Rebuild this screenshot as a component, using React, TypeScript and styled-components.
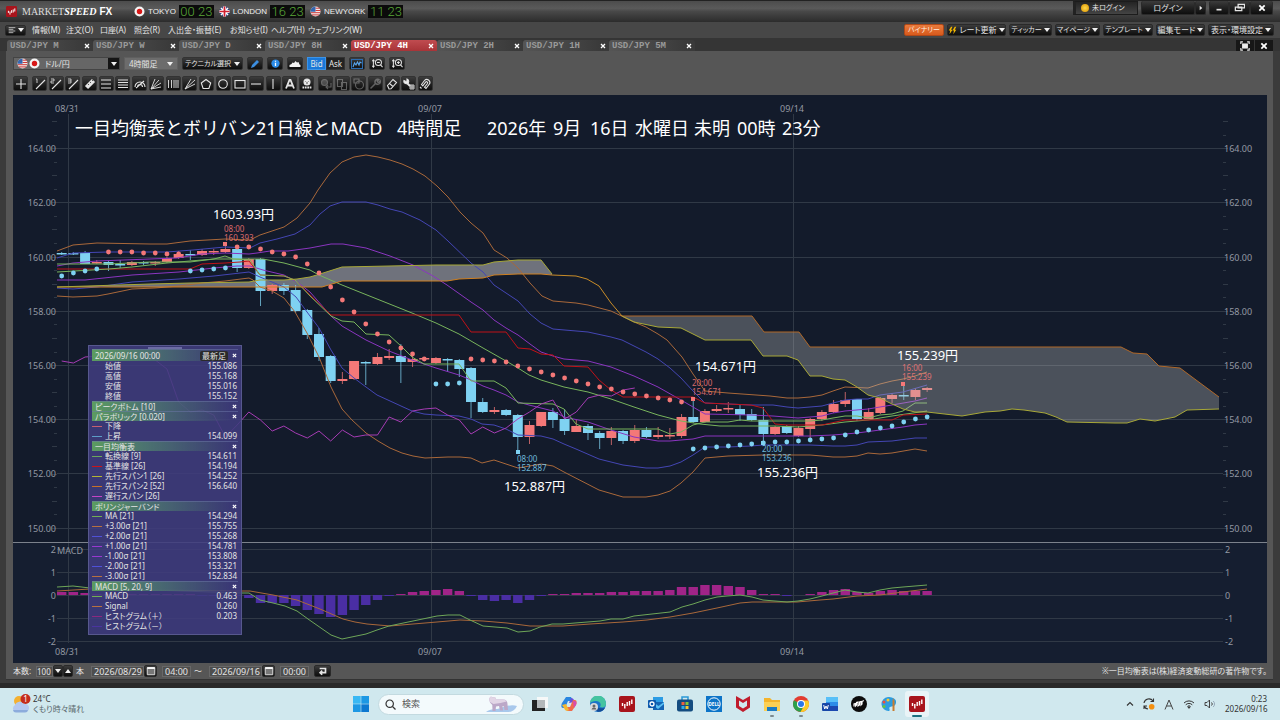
import React from "react";
import styled, { createGlobalStyle, css } from "styled-components";

/* ---------- chart data ---------- */

type Kind = "up" | "down";
// kind, body top, body bottom, wick top, wick bottom
type Candle = [Kind, number, number, number, number];

const candles: Candle[] = [
  ["down", 253, 254, 252, 255], ["down", 253, 254, 252, 255], ["down", 253, 264, 251, 264],
  ["up", 262, 263, 260, 264], ["down", 262, 265, 261, 271], ["down", 264, 265, 260, 268],
  ["up", 262, 265, 261, 266], ["down", 262, 263, 261, 265], ["up", 262, 263, 261, 266],
  ["up", 258, 262, 257, 263], ["up", 254, 258, 251, 259], ["down", 254, 255, 250, 260],
  ["up", 251, 255, 249, 256], ["up", 251, 252, 249, 255], ["up", 249, 252, 243, 253],
  ["down", 249, 268, 248, 272], ["up", 259, 268, 258, 269], ["down", 259, 291, 258, 306],
  ["up", 285, 291, 284, 294], ["down", 285, 291, 283, 295], ["down", 290, 311, 285, 313],
  ["down", 310, 335, 309, 339], ["down", 334, 357, 328, 361], ["down", 356, 381, 355, 383],
  ["up", 379, 381, 372, 384], ["up", 361, 379, 361, 380], ["down", 362, 363, 361, 385],
  ["up", 357, 364, 353, 365], ["up", 356, 358, 349, 360], ["down", 356, 362, 344, 383],
  ["up", 359, 362, 356, 367], ["up", 358, 359, 357, 361], ["up", 358, 363, 357, 364],
  ["down", 359, 360, 358, 371], ["down", 360, 369, 359, 377], ["down", 368, 402, 367, 418],
  ["down", 402, 412, 398, 413], ["up", 410, 412, 407, 414], ["down", 410, 415, 409, 416],
  ["down", 415, 437, 414, 451], ["up", 425, 437, 421, 444], ["up", 412, 426, 412, 427],
  ["down", 412, 420, 408, 428], ["down", 419, 431, 409, 435], ["up", 426, 432, 420, 432],
  ["down", 426, 433, 424, 440], ["down", 433, 438, 431, 449], ["up", 431, 438, 427, 445],
  ["down", 431, 441, 430, 444], ["up", 430, 441, 425, 443], ["down", 430, 437, 427, 438],
  ["up", 435, 437, 427, 439], ["up", 435, 436, 428, 439], ["up", 417, 436, 414, 438],
  ["down", 417, 422, 399, 423], ["up", 411, 422, 409, 423], ["up", 409, 411, 405, 412],
  ["up", 408, 409, 402, 413], ["down", 409, 415, 405, 421], ["down", 414, 420, 409, 421],
  ["down", 420, 434, 407, 443], ["up", 427, 434, 426, 435], ["down", 426, 433, 425, 434],
  ["up", 428, 436, 426, 437], ["up", 419, 429, 418, 438], ["up", 412, 419, 410, 421],
  ["up", 404, 412, 400, 413], ["up", 400, 404, 392, 407], ["down", 399, 419, 399, 421],
  ["up", 412, 419, 408, 419], ["up", 398, 413, 397, 414], ["up", 395, 399, 393, 403],
  ["down", 395, 396, 384, 400], ["up", 390, 397, 388, 400], ["up", 388, 390, 387, 392],
];

const STEP = 11.695;
const xAt = (i: number) => 61.7 + STEP * i;

// parabolic dots: colour kind, first candle index, y values
const parabolic: [Kind, number, number[]][] = [
  ["down", 0, [276, 273, 271, 269]],
  ["up", 4, [252, 252, 252, 253, 253, 254, 254]],
  ["down", 11, [271, 270, 269, 268]],
  ["up", 15, [247, 247, 249, 252, 254, 257, 264, 273, 287, 300, 312, 324, 334, 342, 348, 354, 359]],
  ["down", 32, [384, 384, 383]],
  ["up", 35, [359, 360, 361, 362, 366, 369, 372, 375, 378, 381, 384, 387, 389, 392, 394, 396, 398, 400, 402]],
  ["down", 54, [449, 448, 447, 446, 445, 444, 443, 442, 442, 441, 440, 439, 438, 435, 432, 430, 428, 426, 422, 419, 417]],
];

const histogram = [
  592, 592, 593, 594, 594, 594, 594, 594, 594, 594, 594, 594, 596, 596, 596, 596,
  598, 603, 603, 603, 606, 610, 614, 617, 615, 610, 605, 600, 596, 594, 592, 591, 590, 589, 591,
  596, 600, 601, 600, 603, 600, 596, 594, 594, 593, 593, 593, 592, 592, 591, 591, 591, 590, 587,
  587, 585, 585, 586, 587, 590, 594, 594, 596, 595, 594, 592, 590, 589, 592, 593, 591, 590, 591, 591, 591,
];

const ORANGE = "#a9683a";
const BLUE = "#4446b4";
const PURPLE = "#8a35c0";
const GREEN = "#78b45c";

const lines: [string, string][] = [
  [ORANGE, "57,251 73,245 97,243 150,244 167,244 190,241 225,239 250,240 260,235 284,227 297,218 310,203 318,190 330,173 342,162 354,157 366,155 378,157 390,160 402,164 413,169 425,176 437,186 448,197 460,212 471,223 483,233 494,250 507,258 518,268 530,283 542,296 553,301 576,303 588,305 611,311 634,322 646,327 658,334 667,340 682,357 693,374 705,391 728,393 770,396 787,398 798,398 810,397 822,395 833,391 845,387 868,388 880,384 892,381 903,379 915,376 927,372"],
  [BLUE, "57,258 73,253 108,252 167,252 193,250 225,247 250,248 260,243 277,239 295,234 310,225 320,214 330,206 342,202 354,202 366,202 378,205 390,209 402,212 420,220 436,230 448,241 471,263 483,272 494,285 518,301 530,314 541,323 553,329 588,332 611,337 622,340 634,346 646,352 658,359 670,368 681,378 693,391 705,403 728,404 751,405 773,405 787,407 798,408 810,407 822,406 833,403 845,400 857,399 868,399 880,395 903,392 927,385"],
  [PURPLE, "57,266 73,263 97,261 150,259 177,258 202,254 225,253 249,254 257,253 270,251 288,251 310,248 331,244 343,244 366,248 390,256 413,265 433,276 447,285 471,302 483,310 494,320 506,328 518,335 530,344 541,352 553,356 564,359 588,361 611,367 634,376 658,387 681,400 693,407 705,414 751,415 773,416 798,418 822,416 833,413 845,411 868,409 892,405 915,401 927,398"],
  [GREEN, "57,264 85,264 109,264 150,262 190,262 214,259 250,259 263,259 284,263 310,270 319,275 342,285 377,299 412,313 436,323 459,334 483,348 506,361 518,368 529,375 541,380 564,387 588,392 611,399 634,407 658,415 681,421 700,424 720,426 775,426 798,427 822,425 845,422 868,420 892,416 913,413 927,411"],
  [PURPLE, "57,280 85,280 132,275 179,272 214,268 237,266 250,266 263,270 284,275 297,282 310,292 331,316 342,326 354,333 366,340 389,351 412,360 436,368 459,375 471,380 483,386 494,390 506,395 518,402 529,405 553,411 564,417 588,422 611,430 634,437 658,441 670,441 681,440 693,439 705,436 775,436 810,436 833,435 857,433 880,430 903,427 915,425 927,424"],
  [BLUE, "57,288 73,289 97,287 132,282 179,279 214,276 249,272 260,277 272,282 284,287 296,297 307,312 319,328 331,350 342,368 354,378 366,387 377,395 401,406 412,411 424,414 436,415 459,416 471,419 482,424 494,425 506,429 518,435 541,436 553,439 564,444 576,449 599,459 623,465 646,468 658,468 670,466 681,462 693,455 705,447 728,447 751,446 763,445 810,445 833,446 845,446 857,445 868,442 892,441 915,438 927,438"],
  [ORANGE, "57,296 73,297 97,296 108,294 132,289 155,288 179,286 202,283 225,281 249,278 253,280 260,287 272,291 284,298 295,312 307,333 319,357 331,387 342,409 352,420 366,433 378,441 390,448 402,453 413,456 425,458 448,457 460,457 471,458 482,463 494,460 506,464 518,468 541,464 553,466 564,472 599,490 623,497 646,497 658,495 670,491 681,483 693,472 705,458 728,456 763,455 810,455 822,456 833,457 845,457 857,456 868,453 880,454 892,453 915,449 927,451"],
  ["#c01218", "57,269 190,269 202,264 225,263 240,262 249,261 260,275 284,276 295,280 310,295 331,315 459,315 471,332 506,332 518,348 530,349 541,354 553,355 564,366 588,367 599,380 611,390 623,397 693,397 705,403 751,405 763,408 775,424 787,425 822,425 845,420 892,420 903,415 927,414"],
  [GREEN, "57,272 109,269 132,267 167,263 190,261 214,259 225,256 233,259 250,260 260,275 284,276 295,280 310,296 331,316 342,321 354,322 366,334 389,335 401,346 412,357 424,364 459,364 471,381 494,381 506,388 518,403 553,404 564,409 576,424 588,429 658,429 670,434 681,432 693,425 705,422 728,422 740,420 751,421 810,421 822,420 833,418 845,416 857,416 868,418 880,415 892,414 903,411 915,403 927,403"],
];

const chikou = candles
  .slice(25)
  .map(([kind, top, bottom], i) => `${xAt(i)},${kind === "up" ? top : bottom}`)
  .join(" ");

const span1a = "57,287 150,284 190,283 249,282 260,280 284,280 297,279 310,277 320,274 342,267 436,265 483,265 494,262 518,260 541,260 552,274";
const span2a = "57,287 322,287 342,281 447,281 459,279 483,278 494,275 518,274 541,274 552,275";
const spanJoin = "552,275 576,276 587,279 599,286 611,303 622,316";
const span2b = "622,316 752,316 764,332 799,332 810,347 1121,347 1133,353 1147,354 1159,366 1180,368 1192,377 1219,397";
const span1b = "622,316 634,322 658,327 681,328 693,334 705,340 751,340 763,356 787,356 798,360 810,376 822,376 833,379 845,380 857,387 868,395 880,398 892,404 903,409 915,412 927,412 962,416 985,412 1000,411 1012,409 1024,410 1045,413 1056,417 1067,422 1115,423 1127,423 1140,419 1155,421 1175,417 1187,410 1219,409";
const reversed = (points: string) => points.split(" ").reverse().join(" ");

const macdLine = "57,587 73,586 90,588 242,593 249,593 260,600 273,603 285,606 297,611 308,619 331,635 342,639 366,634 377,630 389,626 413,621 437,616 448,615 460,615 470,620 483,626 507,628 518,632 530,631 540,627 552,624 563,624 575,623 600,621 611,619 623,619 634,616 670,612 682,607 693,604 705,600 717,597 727,596 740,595 752,597 763,600 787,602 798,601 810,599 822,596 833,593 845,590 857,592 868,593 880,590 892,588 903,587 927,585";
const signalLine = "57,591 90,589 150,590 242,591 250,591 273,595 297,600 320,609 343,619 355,622 367,624 390,626 413,624 437,622 460,620 483,621 507,623 530,626 563,626 590,624 623,622 647,620 670,617 693,613 717,608 740,603 752,602 763,602 797,602 820,600 833,599 857,596 880,595 903,592 927,589";

const priceRows: [string, number][] = [
  ["164.00", 148], ["162.00", 202], ["160.00", 257], ["158.00", 311],
  ["156.00", 365], ["154.00", 419], ["152.00", 473], ["150.00", 528],
];
const macdRows: [string, number][] = [["2", 549], ["1", 572], ["0", 595], ["-1", 618], ["-2", 641]];
const dateCols: [string, number][] = [["08/31", 68], ["09/07", 431], ["09/14", 793]];

const headline: [string, number][] = [
  ["一目均衡表とボリバン21日線とMACD", 75], ["4時間足", 397], ["2026年", 487], ["9月", 553],
  ["16日", 590], ["水曜日", 635], ["未明", 694], ["00時", 737], ["23分", 782],
];
const prices: [string, number, number][] = [
  ["1603.93円", 213, 219], ["154.671円", 695, 371], ["155.239円", 897, 360],
  ["155.236円", 757, 477], ["152.887円", 504, 491],
];
const peaks: [Kind, string, string, number, number, number, number][] = [
  ["up", "08:00", "160.393", 224, 232, 225, 244],
  ["down", "08:00", "152.887", 517, 462, 518, 452],
  ["up", "20:00", "154.671", 692, 386, 693, 399],
  ["down", "20:00", "153.236", 762, 452, 763, 443],
  ["up", "16:00", "155.239", 902, 371, 903, 384],
];
const tone: Record<Kind, string> = { up: "#f47878", down: "#7fd2f2" };

/* ---------- shared styles ---------- */

const GlobalStyle = createGlobalStyle`
  * { box-sizing: border-box; }
  body {
    margin: 0;
    background: #d0e8ee;
    font-family: "Noto Sans", "Noto Sans CJK JP", sans-serif;
    font-size: 8px;
    line-height: 10px;
    color: #e4e4e4;
    font-feature-settings: "palt";
  }
  button, input, select {
    font: inherit;
    font-feature-settings: inherit;
    color: inherit;
    margin: 0;
    padding: 0;
    border: 0;
    border-radius: 0;
    background: none;
  }
`;

const bevel = css`
  background: linear-gradient(#3c3c3c, #1e1e1e 60%, #0e0e0e);
  border: 1px solid #2a2a2a;
  border-radius: 2px;
`;

const Page = styled.div`
  display: flex;
  flex-direction: column;
  min-height: 100vh;
`;
const AppWindow = styled.main`
  padding-bottom: 3px;
  background: #3b3b3b;
  border-bottom: 5px solid #292929;
`;
const Spacer = styled.div`
  flex: 1;
`;

/* ---------- title bar ---------- */

const TitleBar = styled.header`
  display: flex;
  align-items: center;
  height: 22px;
  padding: 0 7px 0 6px;
  background: linear-gradient(#4c4c4c, #5a5a5a 35%, #484848 50%, #2c2c2c);
  border-top: 1px solid #222;
`;
const Brand = styled.div`
  display: flex;
  align-items: center;
  width: 128px;
  font: 10px/14px "Liberation Serif", serif;
  color: #ddd;
  svg { margin-right: 5px; }
  em { font-weight: bold; color: #fff; }
  strong { margin-left: 3px; font-family: "Liberation Sans", sans-serif; color: #fff; }
`;
const City = styled.div`
  display: flex;
  align-items: center;
  gap: 3px;
  margin-right: 5px;
  font: 8px/12px "Liberation Sans", sans-serif;
  color: #f0f0f0;
`;
const Clock = styled.time`
  width: 35px;
  height: 13px;
  background: #0b0b0b;
  color: #5aa838;
  font: 300 13px/13px Roboto, sans-serif;
  text-align: center;
  white-space: nowrap;
`;
const SessionGroup = styled.div`
  display: flex;
  align-self: flex-start;
  gap: 3px;
`;
const LoginState = styled.div`
  display: flex;
  align-items: center;
  gap: 3px;
  width: 65px;
  height: 14px;
  padding-left: 5px;
  background: linear-gradient(#242424, #444);
  border: 1px solid #1c1c1c;
  border-left: 3px solid #222;
  font-size: 7px;
`;
const Coin = styled.i`
  width: 8px;
  height: 8px;
  border-radius: 50%;
  background: radial-gradient(#ffd848, #d89000);
`;
const CaptionButtons = styled.div`
  display: flex;
`;
const CaptionButton = styled.button<{ $w: number }>`
  ${bevel}
  display: flex;
  align-items: center;
  justify-content: center;
  width: ${(p) => p.$w}px;
  height: 14px;
  border-top: 0;
`;

/* ---------- menu ---------- */

const MenuBar = styled.nav`
  display: flex;
  align-items: center;
  height: 16px;
  padding: 0 6px 0 5px;
  background: #474747;
`;
const LayoutButton = styled.button`
  ${bevel}
  display: flex;
  align-items: center;
  justify-content: center;
  gap: 2px;
  width: 21px;
  height: 11px;
  margin-right: 6px;
`;
const MenuItem = styled.button<{ $w: number }>`
  width: ${(p) => p.$w}px;
  text-align: left;
  white-space: nowrap;
`;
const QuickButtons = styled.div`
  display: flex;
  gap: 3px;
`;
const QuickButton = styled.button<{ $w: number; $hot?: boolean; $kana?: boolean }>`
  ${bevel}
  display: flex;
  align-items: center;
  justify-content: center;
  gap: 2px;
  width: ${(p) => p.$w}px;
  height: 12px;
  font-size: ${(p) => (p.$kana ? 7 : 8)}px;
  white-space: nowrap;
  ${(p) => p.$hot && css`
    background: linear-gradient(#e87a3c, #d85a1c);
    border-color: #b04818;
    color: #fff0e0;
  `}
`;
const Caret = styled.i<{ $up?: boolean }>`
  flex: none;
  width: 0;
  height: 0;
  border: 3px solid transparent;
  ${(p) => p.$up
    ? css`border-bottom: 4px solid #f0f0f0; border-top: 0;`
    : css`border-top: 4px solid #f0f0f0; border-bottom: 0;`}
`;

/* ---------- tabs ---------- */

const TabStrip = styled.div`
  display: flex;
  align-items: flex-end;
  height: 13px;
  padding: 0 7px;
  background: #353535;
`;
const Tab = styled.div<{ $active?: boolean }>`
  display: flex;
  align-items: center;
  justify-content: space-between;
  width: 86px;
  height: 11px;
  padding: 1px 3px 0;
  background: ${(p) => (p.$active ? "linear-gradient(#c04c50, #a83438)" : "linear-gradient(90deg, #555, #3a3a3a 90%)")};
  border-radius: 3px 3px 0 0;
  color: ${(p) => (p.$active ? "#fff" : "#9a9a9a")};
  font: bold 9px/10px "Liberation Mono", monospace;
`;
const TabLink = styled.button`
  white-space: nowrap;
`;
const CloseButton = styled.button<{ $size?: number }>`
  display: flex;
  align-items: center;
  justify-content: center;
  width: ${(p) => p.$size ?? 7}px;
  height: 9px;
`;
const PaneButtons = styled.div`
  display: flex;
  gap: 1px;
`;
const PaneButton = styled.button`
  display: flex;
  align-items: center;
  justify-content: center;
  width: 18px;
  height: 11px;
  background: #171717;
`;

/* ---------- chart pane ---------- */

const Pane = styled.section`
  margin: 0 7px 0 6px;
  padding: 0 6px 0 7px;
  background: #565656;
  border-bottom: 1px solid #333;
`;
const Toolbar = styled.div`
  display: flex;
  align-items: center;
  gap: 4px;
  height: 25px;
`;
const PairBox = styled.div`
  display: flex;
  align-items: center;
  gap: 1px;
  width: 107px;
  height: 13px;
  padding-left: 3px;
  background: #666;
  border: 1px solid #444;
`;
const PairSelect = styled.select`
  appearance: none;
  flex: 1;
  height: 11px;
  padding-left: 4px;
`;
const ArrowBox = styled.span`
  display: flex;
  align-items: center;
  justify-content: center;
  width: 11px;
  height: 11px;
  background: #151515;
`;
const PeriodBox = styled.div`
  display: flex;
  align-items: center;
  width: 54px;
  height: 13px;
  padding: 0 4px;
  background: #6c6c6c;
  border: 1px solid #5f5f5f;
`;
const PeriodSelect = styled.select`
  appearance: none;
  flex: 1;
  min-width: 0;
`;
const ToolButton = styled.button<{ $w?: number; $dim?: boolean; $tall?: boolean }>`
  ${bevel}
  display: flex;
  align-items: center;
  justify-content: center;
  gap: 3px;
  width: ${(p) => p.$w ?? 16}px;
  height: ${(p) => (p.$tall ? 15 : 13)}px;
  font-size: 7px;
  white-space: nowrap;
  border-color: #333;
  svg { opacity: ${(p) => (p.$dim ? 0.35 : 1)}; }
`;
const PriceSide = styled.div`
  display: flex;
`;
const SideButton = styled.button<{ $on?: boolean }>`
  width: 19px;
  height: 13px;
  background: ${(p) => (p.$on ? "#1a78d8" : "#232323")};
  border: 1px solid ${(p) => (p.$on ? "#3c94e8" : "#333")};
`;
const DrawTools = styled.div`
  display: flex;
  align-items: flex-start;
  gap: 4px;
  height: 19px;
`;
const DrawGroup = styled.div<{ $w?: number }>`
  display: flex;
  justify-content: space-between;
  width: ${(p) => p.$w ?? 15}px;
`;
const ChartArea = styled.div`
  position: relative;
`;
const ChartSvg = styled.svg`
  display: block;
  width: 100%;
  height: auto;
`;

/* ---------- data window ---------- */

const DataWindow = styled.aside`
  position: absolute;
  left: 75px;
  top: 250px;
  width: 154px;
  padding: 1px 3px 3px;
  background: rgba(64, 60, 126, 0.88);
  border: 1px solid #57588e;
`;
const Grip = styled.div`
  width: 34px;
  height: 2px;
  margin: 0 auto;
  background: #6c6ca4;
`;
const DataTable = styled.table`
  width: 100%;
  table-layout: fixed;
  border-collapse: collapse;
  td, th { padding: 0; height: 10px; line-height: 10px; font-weight: normal; text-align: left; white-space: nowrap; }
`;
const SwatchCell = styled.col`
  width: 13px;
`;
const ValueCol = styled.col`
  width: 34px;
`;
const Value = styled.td`
  && { text-align: right; padding-right: 1px; }
`;
const GroupHead = styled.div<{ $tall?: boolean }>`
  display: flex;
  align-items: center;
  justify-content: space-between;
  height: ${(p) => (p.$tall ? 12 : 10)}px;
  padding-left: 3px;
  background: linear-gradient(90deg, #5c9c60, #4c7470 35%, rgba(64, 80, 120, 0) 95%);
  border-top: 1px solid rgba(110, 120, 170, 0.5);
`;
const Latest = styled.button`
  width: 28px;
  height: 10px;
  margin-left: auto;
  margin-right: 3px;
  background: #2b2b2b;
  border-radius: 2px;
`;
const Swatch = styled.i<{ $color: string }>`
  display: block;
  width: 10px;
  height: 1px;
  background: ${(p) => p.$color};
`;

/* ---------- range bar ---------- */

const RangeBar = styled.form`
  display: flex;
  align-items: center;
  height: 16px;
`;
const RangeLabel = styled.label`
  width: 23px;
`;
const Field = styled.input<{ $w: number; $tight?: boolean }>`
  width: ${(p) => p.$w}px;
  height: 11px;
  padding-left: ${(p) => (p.$tight ? 0 : 2)}px;
  background: #4e4e4e;
  border: 1px solid #686868;
  font-size: ${(p) => (p.$tight ? 8 : 9)}px;
`;
const Unit = styled.span<{ $w: number }>`
  width: ${(p) => p.$w}px;
  padding-left: 3px;
`;
const SmallButton = styled.button<{ $w: number; $after?: number }>`
  ${bevel}
  display: flex;
  align-items: center;
  justify-content: center;
  width: ${(p) => p.$w}px;
  height: 12px;
  margin-right: ${(p) => p.$after ?? 0}px;
`;

/* ---------- desktop task bar ---------- */

const Taskbar = styled.footer`
  display: grid;
  grid-template-columns: 1fr auto 1fr;
  align-items: center;
  flex: 1;
  min-height: 32px;
  padding: 0 13px 0 11px;
  background: #d0e8ee;
  color: #333;
`;
const Weather = styled.button`
  display: flex;
  align-items: center;
  gap: 2px;
  text-align: left;
`;
const Muted = styled.div`
  color: #5a676c;
`;
const Dock = styled.div`
  display: flex;
  align-items: center;
  gap: 5px;
`;
const SearchBox = styled.label`
  display: flex;
  align-items: center;
  width: 146px;
  height: 21px;
  margin-right: -1px;
  padding: 0 6px;
  gap: 6px;
  background: #f3fafc;
  border: 1px solid #c3dae0;
  border-radius: 11px;
`;
const SearchInput = styled.input`
  flex: 1;
  min-width: 0;
  font-size: 9px;
  &::placeholder { color: #555; opacity: 1; }
`;
const DockButton = styled.button<{ $state?: "open" | "active" }>`
  position: relative;
  display: flex;
  align-items: center;
  justify-content: center;
  width: 24px;
  height: 26px;
  border-radius: 3px;
  background: ${(p) => (p.$state === "active" ? "#e9f4f7" : "none")};
  &::after {
    content: "";
    display: ${(p) => (p.$state ? "block" : "none")};
    position: absolute;
    bottom: 0;
    width: ${(p) => (p.$state === "active" ? 10 : 4)}px;
    height: 2px;
    border-radius: 1px;
    background: ${(p) => (p.$state === "active" ? "#1c7080" : "#7c8a8e")};
  }
`;
const Tray = styled.div`
  display: flex;
  align-items: center;
  justify-content: flex-end;
  gap: 9px;
`;
const DateTime = styled.div`
  width: 42px;
  text-align: right;
  white-space: nowrap;
`;

/* ---------- icons ---------- */

const Cross = ({ s = 6 }: { s?: number }) => (
  <svg width={s} height={s} viewBox="0 0 6 6"><path d="M1 1l4 4M5 1L1 5" stroke="#fff" strokeWidth="1.3" /></svg>
);

const Japan = () => (
  <svg width="11" height="11" viewBox="0 0 11 11"><circle cx="5.500" cy="5.500" r="5" fill="#f4f4f4" /><circle cx="5.500" cy="5.500" r="2.700" fill="#d81818" /></svg>
);
const Usa = () => (
  <svg width="11" height="11" viewBox="0 0 11 11">
    <circle cx="5.500" cy="5.500" r="5" fill="#f2e8e8" />
    <path d="M5.500 2.200h4.200M5.500 4.500h5M.8 6.700h9.400M2 8.900h7" stroke="#cc3a3a" strokeWidth="1" />
    <path d="M5.500.5v5.200H.5a5 5 0 0 1 5-5.200z" fill="#3466b0" />
  </svg>
);
const Uk = () => (
  <svg width="11" height="11" viewBox="0 0 11 11">
    <circle cx="5.500" cy="5.500" r="5" fill="#27408c" />
    <path d="M2 2l7 7M9 2L2 9" stroke="#fff" strokeWidth="1.600" />
    <path d="M5.500 .5v10M.5 5.500h10" stroke="#fff" strokeWidth="3.200" />
    <path d="M5.500 .5v10M.5 5.500h10" stroke="#d02030" strokeWidth="1.700" />
  </svg>
);
const SpeedMark = ({ s, round }: { s: number; round?: boolean }) => (
  <svg width={s} height={s} viewBox="0 0 16 16">
    <rect width="16" height="16" rx={round ? 8 : 2} fill={round ? "#0c0c0c" : "#a8141c"} />
    {round
      ? <path d="M3 10.500V8l1.500-.5V10l1-1V6.500L7 6v4l1.500-1V6L10 5.500V9l1-1V5.500L12.800 4.500" stroke="#fff" strokeWidth="1.200" fill="none" />
      : <path d="M3.500 7v3M5.800 8v4.500M8.200 6v4M10.500 5v4.500M12.800 3.500V8" stroke="#fff" strokeWidth="1.400" fill="none" />}
  </svg>
);

const glyphs: Record<string, React.ReactNode> = {
  cross: <path d="M6 1v10M1 6h10" />,
  line1: <><path d="M2 11L11 2" /><path d="M2 1h1v4" strokeWidth=".8" /></>,
  line2: <><path d="M2 11L11 2" /><path d="M1 1h3v2H1v2h3" strokeWidth=".8" /></>,
  line3: <><path d="M2 11L11 2" /><path d="M1 1h3v4H1M1 3h3" strokeWidth=".8" /></>,
  ruler: <><path d="M2.500 9.500l7-7" strokeWidth="4.500" /><path d="M4 6l1 1M6 4l1 1M8 2l1 1" stroke="#333" strokeWidth=".8" /></>,
  three: <path d="M1 2h10M1 6h10M1 10h10" />,
  four: <path d="M1 2h10M1 4.500h10M1 7h10M1 9.500h10" />,
  arcs: <path d="M1 9a5 5 0 0 1 10 0M3.500 9a2.500 2.500 0 0 1 5 0M2 10l8-7" />,
  fan: <path d="M1 11L5 1M1 11L9 2M1 11l10-6M1 11l10-2" strokeWidth=".9" />,
  bars: <path d="M1.500 2v8M4.500 2v8M7 2v8M9 2v8M11 2v8" strokeWidth=".9" />,
  fan2: <path d="M1 11L7 1M1 11l10-9M1 11l10-5" strokeWidth=".9" />,
  pentagon: <path d="M6 1.500l4.700 3.500-1.800 5.500H3.100L1.300 5z" />,
  circle: <circle cx="6" cy="6" r="4.300" />,
  rect: <rect x="1" y="2.500" width="10" height="7.500" />,
  dash: <path d="M1 6h10" />,
  vert: <path d="M6 1v10" />,
  text: <path d="M2 10.500L5.500 2h1L10 10.500M3.500 7.500h5" strokeWidth="1.800" />,
  icon: <><circle cx="6" cy="4" r="3" fill="#eee" /><path d="M4.500 3.500h.6M6.900 3.500h.6M5 5h2" stroke="#222" strokeWidth=".8" /><path d="M1.500 9.500h9" strokeWidth="2" strokeDasharray="1.700 .7" /></>,
  undo: <><circle cx="4.500" cy="4.500" r="3" fill="#999" /><path d="M11 5v4H6M8 7L6 9l2 2" /></>,
  copy: <path d="M1.500 1.500h5v7h-5zM5.500 4.500h5v7h-5z" />,
  clock: <><circle cx="6.500" cy="7" r="4" /><path d="M1 1h5v4H1z" /></>,
  wrench: <path d="M1.500 10.500l5-5M6.500 5.500a2.700 2.700 0 0 1 3.300-4L8.300 3.200l.6 1 1.100.3 1.200-1.600a2.700 2.700 0 0 1-4 3z" strokeWidth="1.500" />,
  eraser: <path d="M1.500 7.500l5.500-6 3.500 3-5.500 6.300-2 .2zM3.500 5.500l3.500 3" />,
  wrench2: <><path d="M4 5l3 3" strokeWidth="2" /><path d="M1 2.500a2.500 2.500 0 0 0 3.500 3A2.500 2.500 0 0 0 4 1v2.200H2.500z" fill="#eee" /><path d="M7 7h4v4H7zM7 9h4M9 7v4" strokeWidth=".9" /></>,
  magnet: <path d="M2.500 6.500l3-4a3 3 0 0 1 4.500 4l-3 4-1.500-1.300 3-3.700a1.200 1.200 0 0 0-1.700-1.600l-3 4zM1 9l1.500 1.500" />,
  pencil: <path d="M2 10l1-3 5-5 2 2-5 5z" fill="#3c8ee0" stroke="none" />,
  info: <><circle cx="6" cy="6" r="4.500" fill="#2c8ce8" stroke="none" /><path d="M6 5.200v3.500M6 3v1.200" stroke="#fff" strokeWidth="1.400" /></>,
  cloud: <path d="M.5 9V7l2-1 1-1.500 1.500.5L6.500 3 8 4.500l1.500-.5 1 2.500 1 .5v2z" fill="#f2f2f2" stroke="none" />,
  wave: <><rect x=".5" y="1.500" width="11" height="9" stroke="#2c6cb0" /><path d="M2 9l1.500-4L5 7l1.500-3L8 7l1-3 1.500 1" stroke="#5aa8f0" /></>,
  zoomV: <><circle cx="7" cy="5" r="3.300" /><path d="M5.500 5h3M9.300 7.500L11.500 10M1.500 2v8M.3 3.500L1.500 2l1.200 1.500M.3 8.500L1.500 10l1.200-1.500" /></>,
  zoomIn: <><circle cx="7" cy="5" r="3.300" /><path d="M5.500 5h3M7 3.500v3M9.300 7.500L11.500 10M1.500 2v8M.3 3.500L1.500 2l1.200 1.500M.3 8.500L1.500 10l1.200-1.500" /></>,
  calendar: <><path d="M1.500 2h9v8.500h-9z" fill="#777" /><path d="M1.500 2.500h9" strokeWidth="2" stroke="#fff" /></>,
  back: <path d="M2 3h7v5H3M5 5.500L2.500 8 5 10.500" strokeWidth="2" />,
  bolts: <path d="M4 1L1 6h2L2 11l4-6H4l2-4zM9 1L6 6h2l-1 5 4-6H9l2-4z" fill="#f4b800" stroke="none" />,
  list: <path d="M1 2.500h10M1 5h7M1 7.500h10M1 10h7" />,
  mini: <path d="M3 8h6" strokeWidth="2" />,
  restore: <path d="M4.500 2.500h7v4h-7zM1.500 5.500h7v4h-7z" strokeWidth="1.400" />,
  fit: <><rect x="3" y="3.500" width="6" height="5" fill="#eee" /><path d="M1 3.500V1h2.500M8.500 1H11v2.500M11 8.500V11H8.500M3.500 11H1V8.500" strokeWidth="1.400" /></>,
  right: <path d="M4 2.500v7l4-3.500z" fill="#eee" stroke="none" />,
};
const Glyph = ({ name, s = 12 }: { name: string; s?: number }) => (
  <svg width={s} height={s} viewBox="0 0 12 12" fill="none" stroke="#e4e4e4" strokeWidth="1.100">{glyphs[name]}</svg>
);

const dockArt: Record<string, React.ReactNode> = {
  "スタート": <><path d="M0 0h7.700v7.700H0z" fill="#38b8f4" /><path d="M8.300 0H16v7.700H8.300zM0 8.300h7.700V16H0z" fill="#1c98e4" /><path d="M8.300 8.300H16V16H8.300z" fill="#0c78d0" /></>,
  "タスクビュー": <><rect x="5" y="1" width="11" height="11" fill="#f6f8f8" /><path d="M0 4h5v8h8v3H0z" fill="#222" /><rect x="5" y="4" width="8" height="8" fill="#b4b8ba" /></>,
  "Copilot": <><path d="M5 1h5l2 4H7L4 12H2C0 12 0 9 1 7z" fill="#2a86e0" /><path d="M10 2c2 0 3 1 3.500 4L8 7z" fill="#6c50d8" /><path d="M11 15H6l-2-4h5l3-7h2c2 0 2 3 1 5z" fill="#f06a4c" /><path d="M1 9l4-1 3 6c-3 2-4 0-5-2z" fill="#f4b830" /><path d="M12 5h2c2 1 1.500 3 1 4l-2 3z" fill="#d44cb0" /></>,
  "Edge": <><circle cx="8" cy="8" r="8" fill="#1c74c8" /><path d="M0 7a8 8 0 0 1 16 1c0 3-3 4-6 3 2-4-1-6-4-6S1 6 0 7z" fill="#44c4a0" /><path d="M6 8c0 4 4 5 9 4-2 4-7 5-10 2z" fill="#124c98" /><circle cx="4" cy="11" r="4" fill="#d8dadc" /><circle cx="4" cy="10" r="1.500" fill="#666" /><path d="M1.500 13.500a2.600 2.600 0 0 1 5 0z" fill="#666" /></>,
  "Outlook": <><rect x="5" y="1" width="10" height="12" fill="#2c9ce4" /><path d="M5 6h11v8H5z" fill="#1464b4" /><path d="M5 6l5.500 4L16 6v2l-6 5-5-4z" fill="#58c0f4" /><rect y="4" width="8" height="8" rx="1" fill="#0c58ac" /><circle cx="4" cy="8" r="2" fill="none" stroke="#fff" strokeWidth="1.300" /></>,
  "Store": <><path d="M5 4V1h6v3" fill="none" stroke="#2898d8" strokeWidth="1.500" /><rect y="3.500" width="16" height="12" rx="2" fill="#144c80" /><path d="M4.500 6h3v3h-3z" fill="#f0603c" /><path d="M8.500 6h3v3h-3z" fill="#84c43c" /><path d="M4.500 10h3v3h-3z" fill="#2cace8" /><path d="M8.500 10h3v3h-3z" fill="#f8c830" /></>,
  "Dell": <><rect width="16" height="16" fill="#0c74c8" /><circle cx="8" cy="8" r="6.200" fill="none" stroke="#fff" /><text x="8" y="9.700" fontSize="4.500" fontWeight="bold" textAnchor="middle" fill="#fff">DELL</text></>,
  "McAfee": <path d="M1 0l7 4 7-4v11.500L8 16l-7-4.500zM4 4.500v5.500l4 2.500 4-2.500V4.500L8 7z" fill="#c01c2c" fillRule="evenodd" />,
  "エクスプローラー": <><path d="M0 2h6l2 2h8v11H0z" fill="#f4b42c" /><path d="M0 6h16v9H0z" fill="#fcd054" /><path d="M3 11h10v4H3z" fill="#1c7cc4" /></>,
  "Chrome": <><circle cx="8" cy="8" r="8" fill="#e23c30" /><path d="M1 4.200A8 8 0 0 0 7.500 16L11 10z" fill="#2ca04c" /><path d="M15.200 4.500A8 8 0 0 1 7.500 16L11.500 9 8 4.500z" fill="#fccc28" /><circle cx="8" cy="8" r="4" fill="#fff" /><circle cx="8" cy="8" r="3" fill="#2c78e8" /></>,
  "Word": <><rect x="4" y="1" width="12" height="14" rx="1" fill="#2c8ce8" /><path d="M4 1h12v5H4z" fill="#58c0f8" /><path d="M4 10h12v5H4z" fill="#1c48b0" /><rect y="7" width="8" height="8" rx="1" fill="#1848a8" /><path d="M1.700 9l1 4L4 10l1.300 3 1-4" stroke="#fff" fill="none" /></>,
  "ペイント": <><path d="M8 1a7 7 0 1 0 1 14c2-1-1-3 1-4s5 0 6-4-4-6-8-6z" fill="#2c9ce0" /><circle cx="4" cy="6" r="1.500" fill="#f04c3c" /><circle cx="8" cy="4" r="1.500" fill="#f8c830" /><circle cx="4" cy="10.500" r="1.500" fill="#68c43c" /><path d="M13 2l1.500 3v10h-2V5z" fill="#c87c30" /></>,
};
const dockApps: [string, ("open" | "active")?][] = [
  ["タスクビュー"], ["Copilot"], ["Edge"], ["speed"], ["Outlook"], ["Store"], ["Dell"], ["McAfee"],
  ["エクスプローラー", "open"], ["Chrome", "open"], ["Word"], ["chart"], ["ペイント"], ["speed", "active"],
];

/* ---------- chart ---------- */

const Chart = () => (
  <ChartSvg viewBox="13 95 1254 568" role="img" aria-label="USD/JPY 4H">
    <rect x="13" y="95" width="1254" height="568" fill="#131b2b" />
    <rect x="13" y="543" width="1254" height="120" fill="#151e30" />
    <g stroke="#303946" strokeWidth="1">
      {priceRows.concat(macdRows).map(([t, y]) => <path key={t} d={`M57 ${y + 0.5}H1223`} />)}
      {dateCols.map(([t, x]) => <path key={t} d={`M${x + 0.5} 114V643`} />)}
      {Array.from({ length: 31 }, (_, i) => {
        const y = Math.round(121 + i * 13.56) + 0.5;
        const l = i % 2 ? 3 : 5;
        return <path key={i} d={`M${57 - l} ${y}h${l}M1223 ${y}h${l}`} />;
      })}
    </g>
    <path d="M13 542.500H1267" stroke="#7c828c" />
    <g fill="#9399a3" fontSize="9">
      {priceRows.map(([t, y]) => (
        <React.Fragment key={t}>
          <text x="56" y={y + 4} textAnchor="end">{t}</text>
          <text x="1224" y={y + 4}>{t}</text>
        </React.Fragment>
      ))}
      {macdRows.map(([t, y]) => (
        <React.Fragment key={t}>
          <text x="56" y={y + 4} textAnchor="end">{t}</text>
          <text x="1225" y={y + 4}>{t}</text>
        </React.Fragment>
      ))}
      {dateCols.map(([t, x]) => (
        <React.Fragment key={t}>
          <text x={x - 1} y="112" textAnchor="middle">{t}</text>
          <text x={x - 1} y="655" textAnchor="middle">{t}</text>
        </React.Fragment>
      ))}
      <text x="57" y="554">MACD</text>
    </g>

    <polygon points={`${span1a} ${reversed(span2a)}`} fill="#c4c4c8" opacity=".52" />
    <g>
      {candles.map(([kind, top, bottom, high, low], i) => (
        <g key={i} fill={tone[kind]}>
          <rect x={xAt(i) - 0.5} y={high} width="1" height={low - high} opacity=".75" />
          <rect x={xAt(i) - 5} y={top} width="10" height={Math.max(1.5, bottom - top)} />
        </g>
      ))}
    </g>
    <g fill="none" strokeWidth="1">
      {lines.map(([color, points], i) => <polyline key={i} points={points} stroke={color} />)}
      <polyline points={chikou} stroke="#a63cb4" />
      <polyline points={span2a} stroke="#d08020" />
      <polyline points={span1a} stroke="#a8a838" />
      <polyline points={spanJoin} stroke="#c88c28" />
    </g>
    {parabolic.map(([kind, start, ys]) =>
      ys.map((y, i) => <circle key={`${start}-${i}`} cx={xAt(start + i)} cy={y} r="2.400" fill={tone[kind]} />),
    )}
    <polygon points={`${span2b} ${reversed(span1b)}`} fill="#c0c0c0" opacity=".33" />
    <polyline points={span2b} stroke="#b06828" fill="none" />
    <polyline points={span1b} stroke="#a8a838" fill="none" />

    {histogram.map((y, i) => (
      <rect
        key={i}
        x={xAt(i) - 4.7}
        y={Math.min(y, 595)}
        width="9.400"
        height={Math.abs(y - 595)}
        fill={y < 595 ? "#a02488" : "#4a2ea4"}
      />
    ))}
    <polyline points={signalLine} stroke={ORANGE} fill="none" />
    <polyline points={macdLine} stroke="#6ea658" fill="none" />

    {peaks.map(([kind, time, price, x, y, mx, my]) => (
      <g key={x} fill={tone[kind]} fontSize="8">
        <rect x={mx - 2} y={my - 2} width="4" height="4" />
        <text x={x} y={y} opacity=".85">{time}</text>
        <text x={x} y={y + 9} opacity=".85">{price}</text>
      </g>
    ))}
    <g fill="#fff" fontSize="13" style={{ fontFeatureSettings: "normal" }}>
      {prices.map(([t, x, y]) => <text key={t} x={x} y={y}>{t}</text>)}
    </g>
    <g fill="#fff" fontSize="18" style={{ fontFeatureSettings: "normal" }}>
      {headline.map(([t, x]) => <text key={t} x={x} y="135">{t}</text>)}
    </g>
  </ChartSvg>
);

type DataRow = { head: string } | { name: string; value?: string; color?: string };
const dataRows: DataRow[] = [
  { name: "始値", value: "155.086" }, { name: "高値", value: "155.168" },
  { name: "安値", value: "155.016" }, { name: "終値", value: "155.152" },
  { head: "ピークボトム [10]" }, { head: "パラボリック [0.020]" },
  { name: "下降", color: "#c46070" }, { name: "上昇", value: "154.099", color: "#5c9cc8" },
  { head: "一目均衡表" },
  { name: "転換線 [9]", value: "154.611", color: "#6ca45c" },
  { name: "基準線 [26]", value: "154.194", color: "#cc1418" },
  { name: "先行スパン1 [26]", value: "154.252", color: "#b4b434" },
  { name: "先行スパン2 [52]", value: "156.640", color: "#c87028" },
  { name: "遅行スパン [26]", color: "#c444c8" },
  { head: "ボリンジャーバンド" },
  { name: "MA [21]", value: "154.294", color: "#74ac54" },
  { name: "+3.00σ [21]", value: "155.755", color: "#b87040" },
  { name: "+2.00σ [21]", value: "155.268", color: "#5050d8" },
  { name: "+1.00σ [21]", value: "154.781", color: "#9838d0" },
  { name: "-1.00σ [21]", value: "153.808", color: "#9838d0" },
  { name: "-2.00σ [21]", value: "153.321", color: "#5050d8" },
  { name: "-3.00σ [21]", value: "152.834", color: "#b87040" },
  { head: "MACD [5, 20, 9]" },
  { name: "MACD", value: "0.463", color: "#74ac54" },
  { name: "Signal", value: "0.260", color: "#b87040" },
  { name: "ヒストグラム（＋）", value: "0.203", color: "#8c2880" },
  { name: "ヒストグラム（－）", color: "#4a34a0" },
];

const Readout = () => (
  <DataWindow>
    <Grip />
    <GroupHead $tall>
      2026/09/16 00:00
      <Latest>最新足</Latest>
      <CloseButton aria-label="閉じる"><Cross s={5} /></CloseButton>
    </GroupHead>
    <DataTable>
      <colgroup><SwatchCell /><col /><ValueCol /></colgroup>
      <tbody>
        {dataRows.map((row, i) =>
          "head" in row ? (
            <tr key={i}>
              <th colSpan={3}>
                <GroupHead>{row.head}<CloseButton aria-label="閉じる"><Cross s={5} /></CloseButton></GroupHead>
              </th>
            </tr>
          ) : (
            <tr key={i}>
              <td>{row.color && <Swatch $color={row.color} />}</td>
              <td>{row.name}</td>
              <Value>{row.value}</Value>
            </tr>
          ),
        )}
      </tbody>
    </DataTable>
  </DataWindow>
);

/* ---------- page ---------- */

const menus: [string, number][] = [
  ["情報(M)", 34], ["注文(O)", 34], ["口座(A)", 34], ["照会(R)", 34],
  ["入出金・振替(E)", 62], ["お知らせ(I)", 41], ["ヘルプ(H)", 37], ["ウェブリンク(W)", 52],
];
const quick: [string, number, boolean][] = [
  ["ティッカー", 43, true], ["マイページ", 45, true], ["テンプレート", 50, true],
  ["編集モード", 49, false], ["表示・環境設定", 66, false],
];
const tabs = ["M", "W", "D", "8H", "4H", "2H", "1H", "5M"];
const drawTools = ["line1", "line2", "line3", "ruler", "three", "four", "arcs", "fan", "bars", "fan2", "pentagon", "circle", "rect", "dash", "vert", "text", "icon"];
const editTools = ["undo", "copy", "clock", "wrench", "eraser", "wrench2", "magnet"];

export default function App() {
  return (
    <Page>
      <GlobalStyle />
      <AppWindow>
        <TitleBar>
          <Brand><SpeedMark s={11} />MARKET<em>SPEED</em><strong>FX</strong></Brand>
          <City><Japan />TOKYO<Clock>00 23</Clock></City>
          <City><Uk />LONDON<Clock>16 23</Clock></City>
          <City><Usa />NEWYORK<Clock>11 23</Clock></City>
          <Spacer />
          <SessionGroup>
            <LoginState><Coin />未ログイン</LoginState>
            <CaptionButtons>
              <CaptionButton $w={54}>ログイン</CaptionButton>
              <CaptionButton $w={11} aria-label="ログインメニュー"><Glyph name="right" s={8} /></CaptionButton>
            </CaptionButtons>
            <CaptionButtons>
              <CaptionButton $w={20} aria-label="最小化"><Glyph name="mini" s={10} /></CaptionButton>
              <CaptionButton $w={21} aria-label="元に戻す"><Glyph name="restore" s={11} /></CaptionButton>
              <CaptionButton $w={23} aria-label="閉じる"><Cross s={8} /></CaptionButton>
            </CaptionButtons>
          </SessionGroup>
        </TitleBar>

        <MenuBar>
          <LayoutButton aria-label="レイアウト"><Glyph name="list" s={8} /><Caret /></LayoutButton>
          {menus.map(([label, w]) => <MenuItem key={label} $w={w}>{label}</MenuItem>)}
          <Spacer />
          <QuickButtons>
            <QuickButton $w={40} $hot $kana>バイナリー</QuickButton>
            <QuickButton $w={59}><Glyph name="bolts" s={9} />レート更新<Caret /></QuickButton>
            {quick.map(([label, w, kana]) => <QuickButton key={label} $w={w} $kana={kana}>{label}<Caret /></QuickButton>)}
          </QuickButtons>
        </MenuBar>

        <TabStrip>
          {tabs.map((t) => (
            <Tab key={t} $active={t === "4H"}>
              <TabLink>USD/JPY {t}</TabLink>
              <CloseButton aria-label={`USD/JPY ${t} を閉じる`}><Cross /></CloseButton>
            </Tab>
          ))}
          <Spacer />
          <PaneButtons>
            <PaneButton aria-label="全画面"><Glyph name="fit" s={10} /></PaneButton>
            <PaneButton aria-label="閉じる"><Cross s={8} /></PaneButton>
          </PaneButtons>
        </TabStrip>

        <Pane>
          <Toolbar>
            <PairBox>
              <Usa /><Japan />
              <PairSelect aria-label="通貨ペア"><option>ドル/円</option></PairSelect>
              <ArrowBox><Caret /></ArrowBox>
            </PairBox>
            <PeriodBox>
              <PeriodSelect aria-label="足種"><option>4時間足</option></PeriodSelect>
              <Caret />
            </PeriodBox>
            <ToolButton $w={61}>テクニカル選択<Caret /></ToolButton>
            <ToolButton aria-label="描画"><Glyph name="pencil" /></ToolButton>
            <ToolButton aria-label="情報"><Glyph name="info" s={11} /></ToolButton>
            <ToolButton aria-label="雲"><Glyph name="cloud" /></ToolButton>
            <PriceSide>
              <SideButton $on>Bid</SideButton>
              <SideButton>Ask</SideButton>
            </PriceSide>
            <ToolButton aria-label="波形"><Glyph name="wave" /></ToolButton>
            <ToolButton aria-label="縮小"><Glyph name="zoomV" s={11} /></ToolButton>
            <ToolButton aria-label="拡大"><Glyph name="zoomIn" s={11} /></ToolButton>
          </Toolbar>
          <DrawTools>
            <DrawGroup><ToolButton $w={15} $tall aria-label="cross"><Glyph name="cross" /></ToolButton></DrawGroup>
            <DrawGroup $w={282}>
              {drawTools.map((n) => <ToolButton key={n} $w={15} $tall aria-label={n}><Glyph name={n} /></ToolButton>)}
            </DrawGroup>
            <DrawGroup $w={115}>
              {editTools.map((n, i) => (
                <ToolButton key={n} $w={15} $tall $dim={i < 4} aria-label={n}><Glyph name={n} /></ToolButton>
              ))}
            </DrawGroup>
          </DrawTools>

          <ChartArea>
            <Chart />
            <Readout />
          </ChartArea>

          <RangeBar>
            <RangeLabel htmlFor="count">本数:</RangeLabel>
            <Field id="count" $w={17} $tight defaultValue="100" />
            <SmallButton type="button" $w={10} aria-label="減らす"><Caret /></SmallButton>
            <SmallButton type="button" $w={10} aria-label="増やす"><Caret $up /></SmallButton>
            <Unit $w={18}>本</Unit>
            <Field aria-label="開始日" $w={53} defaultValue="2026/08/29" />
            <SmallButton type="button" $w={13} $after={5} aria-label="開始日を選ぶ"><Glyph name="calendar" s={10} /></SmallButton>
            <Field aria-label="開始時刻" $w={29} defaultValue="04:00" />
            <Unit $w={18}>〜</Unit>
            <Field aria-label="終了日" $w={53} defaultValue="2026/09/16" />
            <SmallButton type="button" $w={13} $after={5} aria-label="終了日を選ぶ"><Glyph name="calendar" s={10} /></SmallButton>
            <Field aria-label="終了時刻" $w={29} defaultValue="00:00" />
            <Unit $w={5} />
            <SmallButton type="button" $w={17} aria-label="適用"><Glyph name="back" s={10} /></SmallButton>
            <Spacer />
            <span>※一目均衡表は(株)経済変動総研の著作物です。</span>
          </RangeBar>
        </Pane>
      </AppWindow>

      <Taskbar>
        <Weather>
          <svg width="20" height="22" viewBox="0 0 20 22">
            <circle cx="8" cy="8" r="5" fill="#f4b030" />
            <path d="M4 19a4 4 0 0 1 0-7 5 5 0 0 1 9-1 4 4 0 0 1 2 8z" fill="#b4c8f0" />
            <path d="M2 17h15a3 3 0 0 1-3 2.500H5A3 3 0 0 1 2 17z" fill="#8cacdc" />
            <circle cx="14.500" cy="6" r="5" fill="#c42b1c" />
            <text x="14.500" y="9" fontSize="8" textAnchor="middle" fill="#fff">1</text>
          </svg>
          <div><div>24°C</div><Muted>くもり時々晴れ</Muted></div>
        </Weather>
        <Dock>
          <DockButton aria-label="スタート"><svg width="16" height="16" viewBox="0 0 16 16">{dockArt["スタート"]}</svg></DockButton>
          <SearchBox>
            <svg width="11" height="11" viewBox="0 0 11 11" fill="none" stroke="#333" strokeWidth="1.200"><circle cx="4.700" cy="4.700" r="3.700" /><path d="M7.500 7.500L10.500 10.500" /></svg>
            <SearchInput placeholder="検索" aria-label="検索" />
            <svg width="31" height="17" viewBox="0 0 31 17">
              <path d="M0 16c5-4 10-2 15-4s11-4 16-2c-2 4-5 6-9 6z" fill="#a8c8ec" />
              <path d="M3 2.500L5 .5l1.500 1L9 1l1 2.500h7c3 0 4.500 2 4.500 4.500L22 14h-3.500l-.5-3.500-1.500-.5.5 4.500h-3L13 10l-3 .5L9.500 15h-3l-.2-6L4 6.500z" fill="#bca8c8" />
              <path d="M3 2.500L5 .5l1.500 1L9 1l1 2.500h7c2 0 3 1 3.500 2l-6 1.500-7 1L4 6z" fill="#e2d6e6" />
            </svg>
          </SearchBox>
          {dockApps.map(([name, state], i) => (
            <DockButton key={i} $state={state} aria-label={name}>
              {name === "speed" || name === "chart"
                ? <SpeedMark s={16} round={name === "chart"} />
                : <svg width="16" height="16" viewBox="0 0 16 16">{dockArt[name]}</svg>}
            </DockButton>
          ))}
        </Dock>
        <Tray>
          <svg width="8" height="8" viewBox="0 0 8 8" fill="none" stroke="#333" strokeWidth="1.100"><path d="M1 5.500l3-3 3 3" /></svg>
          <svg width="12" height="12" viewBox="0 0 12 12" fill="none" stroke="#333" strokeWidth="1.100">
            <path d="M1 5a5 5 0 0 1 9-2M10.500 .5V3.500H7.500M5 11a5 5 0 0 1-4-3M1 11V8h3" /><circle cx="8.700" cy="8.700" r="2.800" fill="#f49010" stroke="none" />
          </svg>
          <svg width="10" height="11" viewBox="0 0 10 11" fill="none" stroke="#444" strokeWidth="1"><path d="M1 10.500L5 1l4 9.500M2.500 7h5" /></svg>
          <svg width="12" height="10" viewBox="0 0 12 10" fill="none" stroke="#333" strokeWidth="1"><path d="M1 4a7 7 0 0 1 10 0M2.700 5.800a4.700 4.700 0 0 1 6.600 0M4.400 7.500a2.300 2.300 0 0 1 3.200 0" /><circle cx="6" cy="8.500" r=".7" fill="#333" /></svg>
          <svg width="12" height="10" viewBox="0 0 12 10" fill="none" stroke="#444" strokeWidth="1"><path d="M1 3.500h2l2.500-2.500v8L3 6.500H1zM7.500 3.500a2 2 0 0 1 0 3" /><path d="M9.200 2a4 4 0 0 1 0 6" stroke="#9ab" /></svg>
          <DateTime>0:23<br />2026/09/16</DateTime>
        </Tray>
      </Taskbar>
    </Page>
  );
}
